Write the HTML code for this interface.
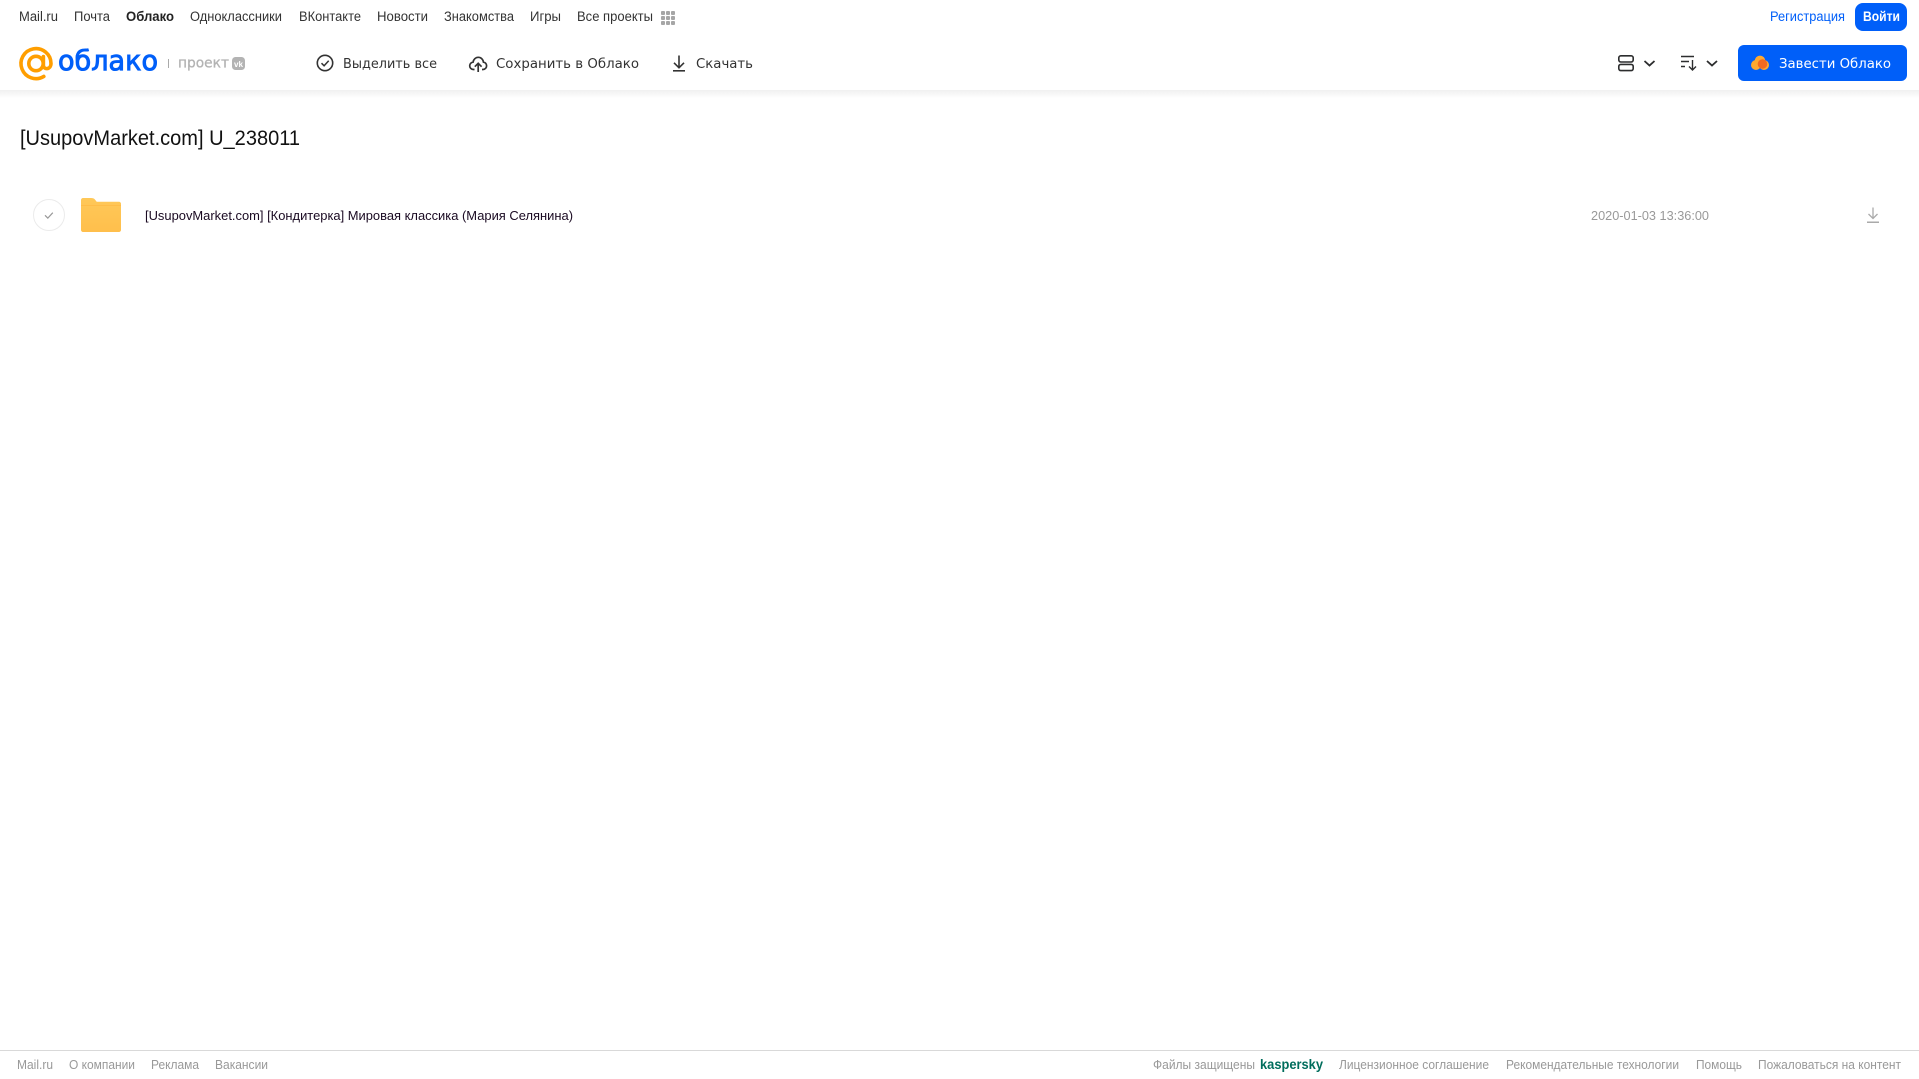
<!DOCTYPE html>
<html lang="ru"><head><meta charset="utf-8"><title>[UsupovMarket.com] U_238011</title>
<style>
html,body{margin:0;padding:0;width:1919px;height:1079px;overflow:hidden;background:#fff}
svg{display:block;position:absolute;left:0;top:0}
text{font-family:"Liberation Sans","Noto Sans CJK SC",sans-serif}
.n{font-size:13.5px;fill:#333}
.t{font-family:"DejaVu Sans",sans-serif;font-size:13px;fill:#333}
.f{font-size:12.5px;fill:#999}
</style></head><body>
<svg width="1919" height="1079" viewBox="0 0 1919 1079" xmlns="http://www.w3.org/2000/svg">
<defs>
<linearGradient id="sh" x1="0" y1="0" x2="0" y2="1"><stop offset="0" stop-color="#f0f0f0"/><stop offset="1" stop-color="#fff"/></linearGradient>
<linearGradient id="fo" x1="0" y1="0" x2="0" y2="1"><stop offset="0" stop-color="#ffc858"/><stop offset="1" stop-color="#ffbf4c"/></linearGradient>
</defs>
<rect x="0" y="90" width="1919" height="8" fill="url(#sh)"/>

<text class="n" x="19" y="21" textLength="39" lengthAdjust="spacingAndGlyphs">Mail.ru</text>
<text class="n" x="74" y="21" textLength="36" lengthAdjust="spacingAndGlyphs">Почта</text>
<text class="n" x="126" y="21" textLength="48" lengthAdjust="spacingAndGlyphs" font-weight="700" style="fill:#222">Облако</text>
<text class="n" x="190" y="21" textLength="92" lengthAdjust="spacingAndGlyphs">Одноклассники</text>
<text class="n" x="299" y="21" textLength="62" lengthAdjust="spacingAndGlyphs">ВКонтакте</text>
<text class="n" x="377" y="21" textLength="51" lengthAdjust="spacingAndGlyphs">Новости</text>
<text class="n" x="444" y="21" textLength="70" lengthAdjust="spacingAndGlyphs">Знакомства</text>
<text class="n" x="530" y="21" textLength="31" lengthAdjust="spacingAndGlyphs">Игры</text>
<text class="n" x="577" y="21" textLength="76" lengthAdjust="spacingAndGlyphs">Все проекты</text>
<g fill="#a6a6a6"><rect x="661" y="11" width="4" height="4" rx="1"/><rect x="666" y="11" width="4" height="4" rx="1"/><rect x="671" y="11" width="4" height="4" rx="1"/><rect x="661" y="16" width="4" height="4" rx="1"/><rect x="666" y="16" width="4" height="4" rx="1"/><rect x="671" y="16" width="4" height="4" rx="1"/><rect x="661" y="21" width="4" height="4" rx="1"/><rect x="666" y="21" width="4" height="4" rx="1"/><rect x="671" y="21" width="4" height="4" rx="1"/></g>

<text x="1770" y="21" font-size="13.5" fill="#005ff9" textLength="75" lengthAdjust="spacingAndGlyphs">Регистрация</text>
<rect x="1855" y="3" width="52" height="28" rx="8" fill="#005ff9"/>
<text x="1863" y="21" font-size="13.5" font-weight="700" fill="#fff" textLength="37" lengthAdjust="spacingAndGlyphs">Войти</text>

<!-- logo -->
<g fill="none" stroke="#ff9e00" stroke-width="3.6" stroke-linecap="round">
<circle cx="36" cy="63.5" r="7.2"/>
<path d="M43.4 56.5V65.2C43.4 70 50.8 70 51 63.5A15 15 0 1 0 43.8 76.4"/>
</g>
<text x="58" y="70" font-size="27.5" fill="#005ff9" stroke="#005ff9" stroke-width="0.9" style="font-family:'DejaVu Sans',sans-serif" textLength="100" lengthAdjust="spacingAndGlyphs">облако</text>
<rect x="168" y="59" width="1" height="9" fill="#aaa"/>
<text x="178" y="67.5" font-size="14" fill="#b3b3b3" stroke="#b3b3b3" stroke-width="0.3" style="font-family:'DejaVu Sans',sans-serif" textLength="51" lengthAdjust="spacingAndGlyphs">проект</text>
<rect x="232" y="57" width="13" height="13" rx="3.5" fill="#b3b3b3"/>
<text x="234" y="67" font-size="8" font-weight="700" fill="#fff" textLength="9" lengthAdjust="spacingAndGlyphs">vk</text>

<!-- toolbar -->
<circle cx="325" cy="63" r="7.7" fill="none" stroke="#333" stroke-width="1.6"/>
<path d="M321.5 63.2l2.6 2.6 4.6-5" fill="none" stroke="#333" stroke-width="1.5"/>
<text class="t" x="343" y="68" textLength="94" lengthAdjust="spacingAndGlyphs">Выделить все</text>
<path d="M474.5 69.5H473.5C471 69.5 469.7 67.6 469.7 65.8C469.7 63.8 471.2 62.3 473 62.2C473.4 59.5 475.6 57.3 478.3 57.3C481 57.3 483.2 59.4 483.5 62.2C485.2 62.3 486.6 63.8 486.6 65.7C486.6 67.7 485.2 69.5 483 69.5H482" fill="none" stroke="#333" stroke-width="1.7"/>
<path d="M478.2 72V63.5M474.8 66.7l3.4-3.4 3.4 3.4" fill="none" stroke="#333" stroke-width="1.7"/>
<text class="t" x="496" y="68" textLength="143" lengthAdjust="spacingAndGlyphs">Сохранить в Облако</text>
<path d="M679 55.5V67.5M674 62.8l5 5 5-5" fill="none" stroke="#333" stroke-width="1.6"/>
<rect x="673" y="70" width="12" height="1.6" fill="#333"/>
<text class="t" x="696" y="68" textLength="57" lengthAdjust="spacingAndGlyphs">Скачать</text>

<!-- right toolbar -->
<g fill="none" stroke="#2c2d2e" stroke-width="1.6">
<rect x="1618.8" y="55.8" width="14.4" height="6.2" rx="2"/>
<rect x="1618.8" y="64.4" width="14.4" height="6.2" rx="2"/>
<path d="M1644.5 61l5 4.5 5-4.5" stroke-width="1.8"/>
<path d="M1681 56.5h13M1681 61.5h8M1681 66.5h4M1692.5 60v9.5M1689 66.5l3.5 3.5 3.5-3.5" stroke-width="1.4"/>
<path d="M1707 61l5 4.5 5-4.5" stroke-width="1.8"/>
</g>
<rect x="1738" y="45" width="169" height="36" rx="6" fill="#005ff9"/>
<g fill="#ffa930"><circle cx="1756" cy="65" r="5"/><circle cx="1760" cy="60.8" r="5.2"/><circle cx="1764" cy="65" r="5"/></g>
<circle cx="1762.5" cy="64" r="4.8" fill="#f26a21"/>
<text class="t" x="1779" y="68" style="fill:#fff" textLength="112" lengthAdjust="spacingAndGlyphs">Завести Облако</text>

<!-- title -->
<text x="20" y="145" font-size="21" fill="#111" textLength="280" lengthAdjust="spacingAndGlyphs">[UsupovMarket.com] U_238011</text>

<!-- row -->
<circle cx="49" cy="215" r="15.5" fill="#fff" stroke="#ebebeb" stroke-width="1"/>
<path d="M45 215.3l2.8 2.8 5-5.4" fill="none" stroke="#999" stroke-width="1.2"/>
<path d="M83 198h8c2 0 3.2.6 4 1.6l1.7 2.2H119c1.1 0 2 .9 2 2V230c0 1.1-.9 2-2 2H83c-1.1 0-2-.9-2-2V200c0-1.1.9-2 2-2z" fill="url(#fo)"/>
<rect x="81" y="205" width="40" height="1" fill="#ffb640" opacity=".6"/>
<text x="145" y="220" font-size="13.33" fill="#1a0a22" textLength="428" lengthAdjust="spacingAndGlyphs">[UsupovMarket.com] [Кондитерка] Мировая классика (Мария Селянина)</text>
<text x="1591" y="220" font-size="13.33" fill="#999" textLength="118" lengthAdjust="spacingAndGlyphs">2020-01-03 13:36:00</text>
<path d="M1873 207.5V218.5M1868.5 214l4.5 4.5 4.5-4.5" fill="none" stroke="#aaa" stroke-width="1.3"/>
<rect x="1867" y="221.5" width="12" height="1.5" fill="#aaa"/>

<!-- footer -->
<rect x="0" y="1050" width="1919" height="1" fill="#d9d9d9"/>
<text class="f" x="17" y="1069" textLength="36" lengthAdjust="spacingAndGlyphs">Mail.ru</text>
<text class="f" x="69" y="1069" textLength="66" lengthAdjust="spacingAndGlyphs">О компании</text>
<text class="f" x="151" y="1069" textLength="48" lengthAdjust="spacingAndGlyphs">Реклама</text>
<text class="f" x="215" y="1069" textLength="53" lengthAdjust="spacingAndGlyphs">Вакансии</text>
<text class="f" x="1153" y="1069" textLength="102" lengthAdjust="spacingAndGlyphs">Файлы защищены</text>
<text x="1260" y="1069" font-size="13.5" font-weight="700" fill="#006d5c" textLength="63" lengthAdjust="spacingAndGlyphs">kaspersky</text>
<text class="f" x="1339" y="1069" textLength="150" lengthAdjust="spacingAndGlyphs">Лицензионное соглашение</text>
<text class="f" x="1506" y="1069" textLength="173" lengthAdjust="spacingAndGlyphs">Рекомендательные технологии</text>
<text class="f" x="1696" y="1069" textLength="46" lengthAdjust="spacingAndGlyphs">Помощь</text>
<text class="f" x="1758" y="1069" textLength="143" lengthAdjust="spacingAndGlyphs">Пожаловаться на контент</text>
</svg>
</body></html>
